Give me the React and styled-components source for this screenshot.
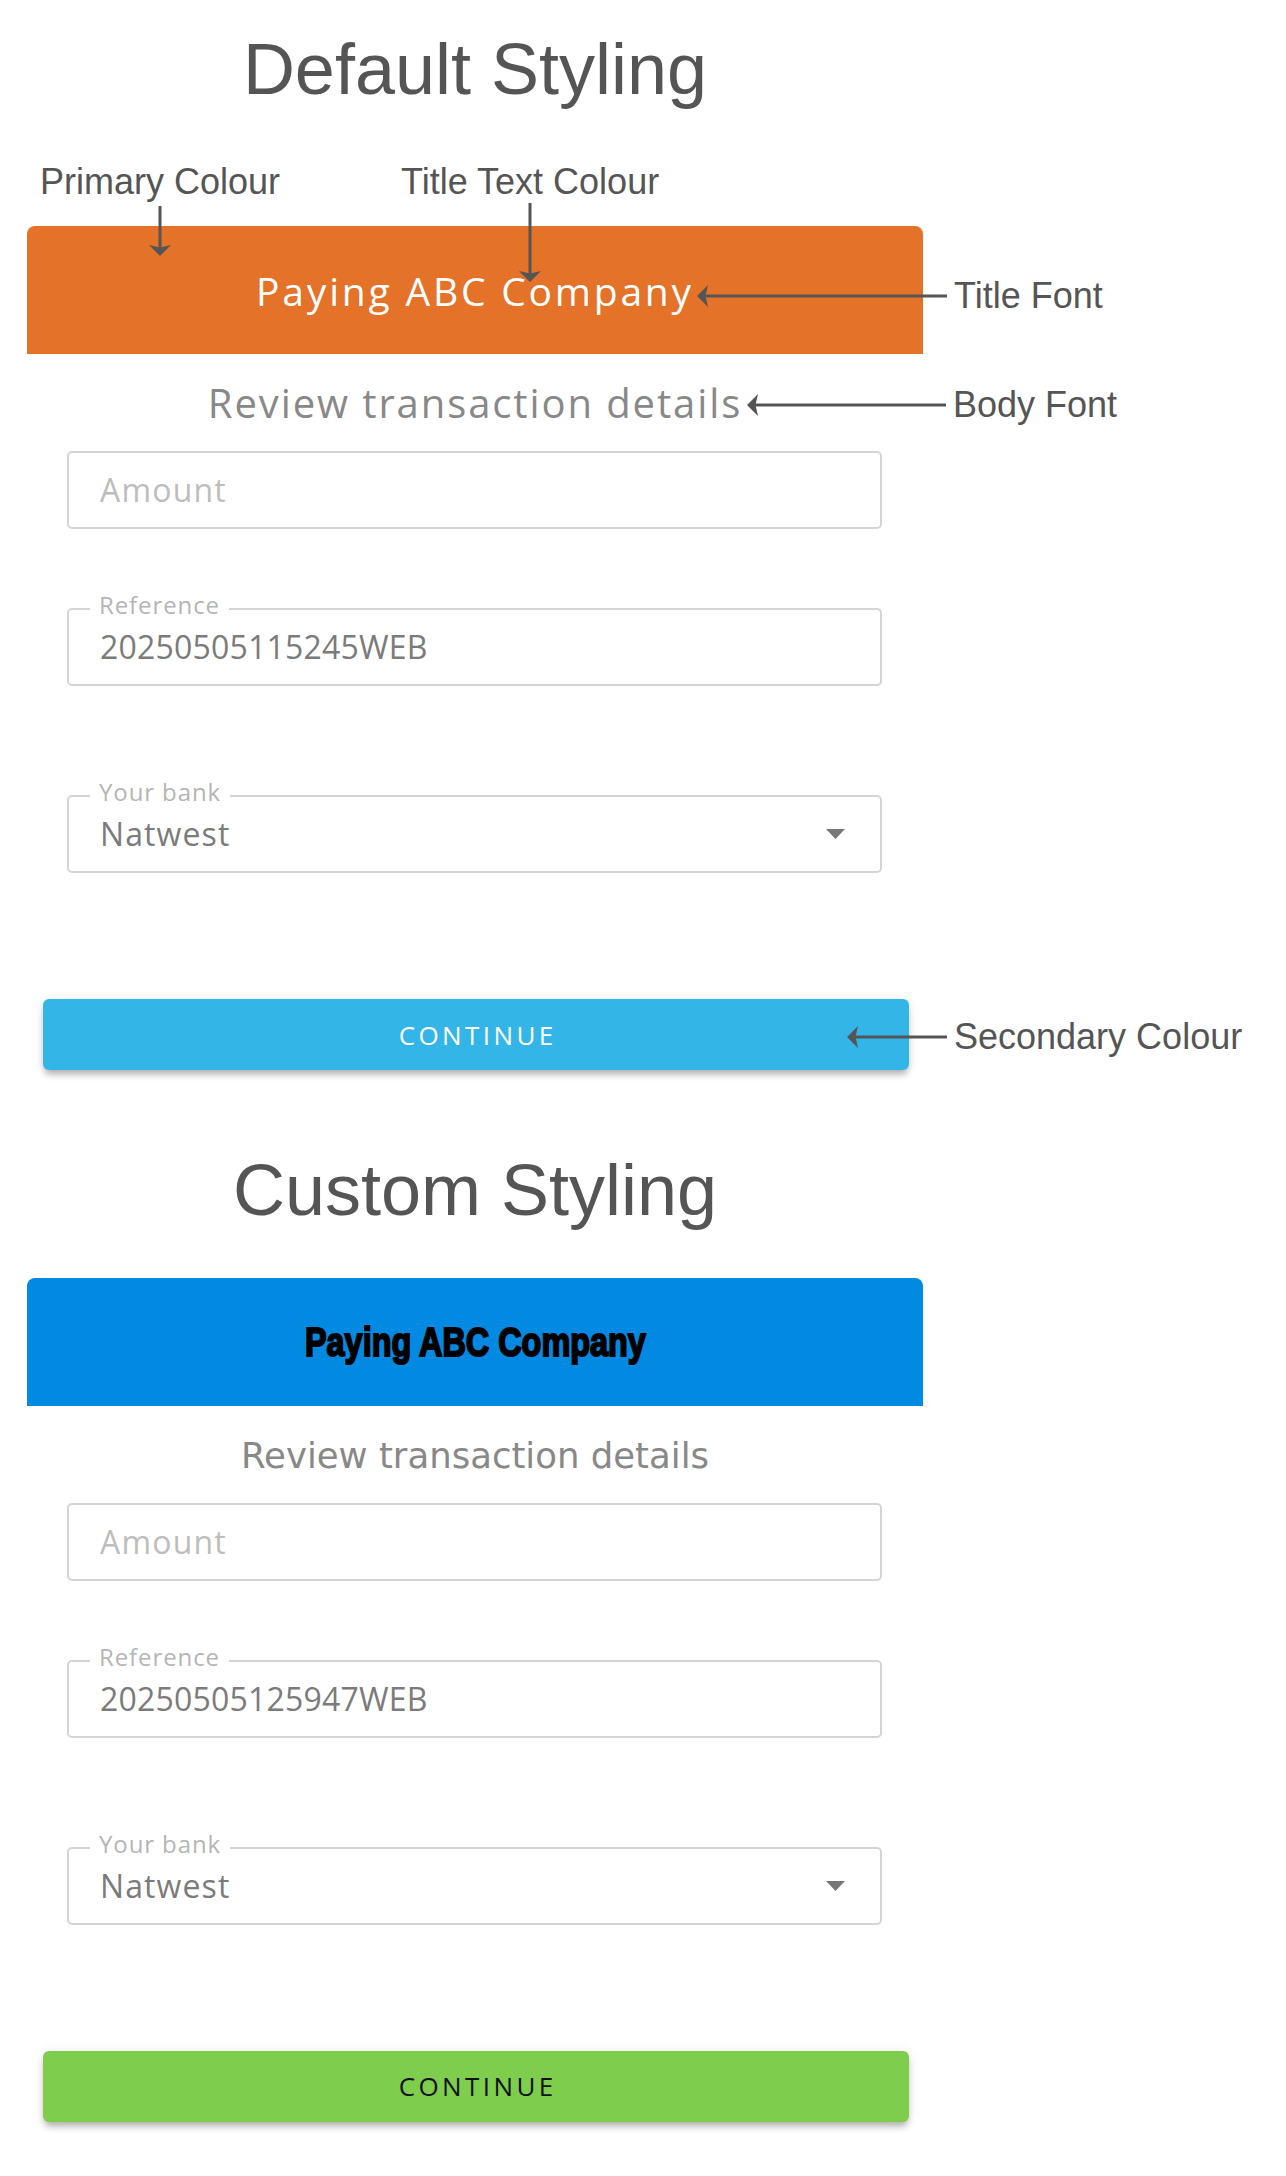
import styled, { createGlobalStyle } from "styled-components";

const BODY = `"Open Sans", "Noto Sans", sans-serif`;
const NOTE = `"Liberation Sans", Arial, sans-serif`;
const INK = "#555";

const GlobalStyle = createGlobalStyle`
  body {
    margin: 0;
    background: #fff;
  }
  * {
    box-sizing: border-box;
  }
`;

const Page = styled.div`
  width: 1286px;
  min-height: 2176px;
  padding-left: 27px;
  overflow: hidden;
`;

const Column = styled.div`
  width: 896px;
  display: flex;
  flex-direction: column;
`;

const Heading = styled.h1`
  margin: ${p => p.$top}px 0 0;
  font: 400 72px/72px ${NOTE};
  color: ${INK};
  text-align: center;
`;

// labels above the banner, arrows hang down over it
const TopNotes = styled.div`
  height: 121px;
  padding: 58.5px 0 0 13px;
  display: flex;
  gap: 121px;
  align-items: flex-start;
`;

const Note = styled.div`
  position: relative;
  font: 400 36px/36px ${NOTE};
  color: ${INK};
  white-space: nowrap;
`;

const DownPointer = styled.div`
  position: absolute;
  left: 50%;
  top: calc(100% + ${p => p.$gap}px);
  transform: translateX(-50%);
  display: flex;
  z-index: 2;
`;

// callout on the right side: arrow then label
const SideNote = styled.div`
  position: absolute;
  left: ${p => p.$left}px;
  top: ${p => p.$top}px;
  display: flex;
  align-items: center;
  gap: 7px;
  font: 400 36px/36px ${NOTE};
  letter-spacing: 0;
  color: ${INK};
  white-space: nowrap;
  text-transform: none;
  z-index: 2;
`;

const Banner = styled.div`
  position: relative;
  margin-top: ${p => p.$top}px;
  height: 128px;
  background: ${p => p.$bg};
  border-radius: 8px 8px 0 0;
  display: flex;
  align-items: center;
  justify-content: center;
`;

const BannerTitle = styled.span`
  color: #fff;
  font: 400 39px/39px ${BODY};
  letter-spacing: 2.8px;
  white-space: nowrap;
`;

const HeavyTitle = styled.span`
  color: #000;
  font: 700 40px/40px ${NOTE};
  -webkit-text-stroke: 2px #000;
  transform: scaleX(0.81);
  white-space: nowrap;
`;

const Subtitle = styled.h2`
  position: relative;
  margin: ${p => p.$mt}px 0 ${p => p.$mb}px;
  height: 40px;
  font: 400 ${p => p.$size}px/40px ${p => p.$font};
  letter-spacing: ${p => p.$ls}px;
  color: #888;
  text-align: center;
  white-space: nowrap;
`;

const Field = styled.div`
  position: relative;
  margin: ${p => p.$top}px 41px 0 40px;
  height: 78px;
  border: 2px solid #d4d4d4;
  border-radius: 5px;
  display: flex;
  align-items: center;
  justify-content: space-between;
  padding: 0 35px 0 31px;
`;

const FieldLabel = styled.span`
  position: absolute;
  top: -17px;
  left: 21px;
  padding: 0 9px;
  background: #fff;
  font: 400 24px/24px ${BODY};
  letter-spacing: 0.9px;
  color: #b5b5b5;
`;

const FieldValue = styled.span`
  font: 400 32px/32px ${BODY};
  letter-spacing: ${p => p.$ls}px;
  color: ${p => (p.$placeholder ? "#bdbdbd" : "#7b7b7b")};
`;

const Button = styled.button`
  position: relative;
  margin: 126px 0 0 16px;
  width: 866px;
  height: 71px;
  padding: 0 0 0 3.4px;
  border: 0;
  border-radius: 6px;
  background: ${p => p.$bg};
  color: ${p => p.$color};
  font: 500 26px/26px ${BODY};
  letter-spacing: 3.4px;
  text-transform: uppercase;
  box-shadow: 0 6px 7px -2px rgba(0, 0, 0, 0.28), 0 1px 12px rgba(0, 0, 0, 0.1);
  cursor: pointer;
`;

function LeftArrow({ length }) {
  return (
    <svg width={length} height="22" viewBox={`0 0 ${length} 22`}>
      <line x1="8" y1="11" x2={length} y2="11" stroke={INK} strokeWidth="3" />
      <polygon points="0,11 11,0 8.5,11 11,22" fill={INK} />
    </svg>
  );
}

function DownArrow({ length }) {
  return (
    <svg width="22" height={length} viewBox={`0 0 22 ${length}`}>
      <line x1="11" y1="0" x2="11" y2={length - 8} stroke={INK} strokeWidth="3" />
      <polygon points={`11,${length} 0,${length - 11} 11,${length - 8.5} 22,${length - 11}`} fill={INK} />
    </svg>
  );
}

function Caret() {
  return (
    <svg width="19" height="10" viewBox="0 0 19 10">
      <polygon points="0,0 19,0 9.5,10" fill="#777" />
    </svg>
  );
}

function PaymentForm({ config }) {
  const { annotated } = config;
  return (
    <Column>
      <Heading $top={config.headingTop}>{config.heading}</Heading>

      {annotated && (
        <TopNotes>
          <Note>
            Primary Colour
            <DownPointer $gap={6.5}>
              <DownArrow length={50} />
            </DownPointer>
          </Note>
          <Note>
            Title Text Colour
            <DownPointer $gap={3.5}>
              <DownArrow length={79} />
            </DownPointer>
          </Note>
        </TopNotes>
      )}

      <Banner $bg={config.primary} $top={annotated ? 0 : 52}>
        {config.heavyTitle ? (
          <HeavyTitle>Paying ABC Company</HeavyTitle>
        ) : (
          <BannerTitle>Paying ABC Company</BannerTitle>
        )}
        {annotated && (
          <SideNote $left={670} $top={52}>
            <LeftArrow length={250} />
            Title Font
          </SideNote>
        )}
      </Banner>

      <Subtitle {...config.subtitle}>
        Review transaction details
        {annotated && (
          <SideNote $left={720} $top={4.5}>
            <LeftArrow length={199} />
            Body Font
          </SideNote>
        )}
      </Subtitle>

      <Field $top={0}>
        <FieldValue $placeholder $ls={1.2}>Amount</FieldValue>
      </Field>

      <Field $top={79}>
        <FieldLabel>Reference</FieldLabel>
        <FieldValue $ls={0.2}>{config.reference}</FieldValue>
      </Field>

      <Field $top={109}>
        <FieldLabel>Your bank</FieldLabel>
        <FieldValue $ls={1.1}>Natwest</FieldValue>
        <Caret />
      </Field>

      <Button $bg={config.secondary} $color={config.buttonText}>
        Continue
        {annotated && (
          <SideNote $left={804} $top={20}>
            <LeftArrow length={100} />
            Secondary Colour
          </SideNote>
        )}
      </Button>
    </Column>
  );
}

const defaultStyling = {
  heading: "Default Styling",
  headingTop: 33,
  annotated: true,
  primary: "#e47228",
  secondary: "#33b5e8",
  buttonText: "#fff",
  reference: "20250505115245WEB",
  subtitle: { $mt: 28.5, $mb: 28.5, $size: 40, $ls: 1.9, $font: BODY },
};

const customStyling = {
  heading: "Custom Styling",
  headingTop: 84,
  annotated: false,
  heavyTitle: true,
  primary: "#028ae3",
  secondary: "#7ecd4d",
  buttonText: "#111",
  reference: "20250505125947WEB",
  subtitle: {
    $mt: 29.7,
    $mb: 27.3,
    $size: 35.5,
    $ls: 0,
    $font: `"DejaVu Sans", Verdana, sans-serif`,
  },
};

export default function App() {
  return (
    <>
      <GlobalStyle />
      <Page>
        <PaymentForm config={defaultStyling} />
        <PaymentForm config={customStyling} />
      </Page>
    </>
  );
}
